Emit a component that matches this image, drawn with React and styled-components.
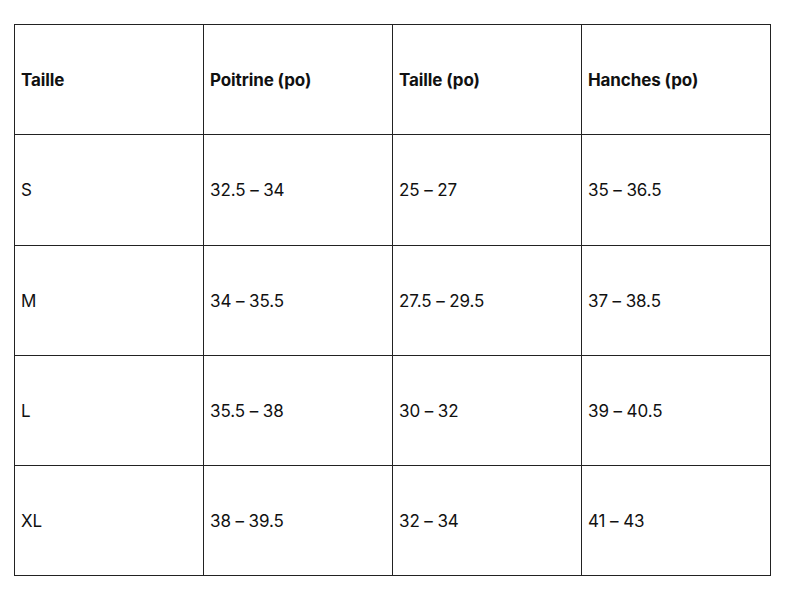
import React from "react";
import styled, { createGlobalStyle } from "styled-components";

const Global = createGlobalStyle`
  html, body { margin: 0; padding: 0; background: #ffffff; }
  body { font-family: "Inter", "Noto Sans", sans-serif; color: #111; }
`;

const Page = styled.div`
  width: 800px;
  height: 600px;
  padding: 24px 0 0 14px;
  box-sizing: border-box;
`;

const Table = styled.table`
  border-collapse: collapse;
  table-layout: fixed;
  width: 756px;
  border: 1px solid #222;
`;

const Cell = styled.td`
  width: 189px;
  height: ${(p) => p.$h}px;
  box-sizing: border-box;
  border: 1px solid #222;
  padding: 0 0 0 6px;
  vertical-align: middle;
  font-size: 17px;
  letter-spacing: -0.1px;
  font-weight: ${(p) => (p.$head ? 700 : 400)};
  color: #111;
  line-height: 20px;
`;

const header = ["Taille", "Poitrine (po)", "Taille (po)", "Hanches (po)"];
const rows = [
  ["S", "32.5 – 34", "25 – 27", "35 – 36.5"],
  ["M", "34 – 35.5", "27.5 – 29.5", "37 – 38.5"],
  ["L", "35.5 – 38", "30 – 32", "39 – 40.5"],
  ["XL", "38 – 39.5", "32 – 34", "41 – 43"],
];
const heights = [110, 111, 110, 110, 110];

export default function App() {
  return (
    <>
      <Global />
      <Page>
        <Table>
          <tbody>
            <tr>
              {header.map((h) => (
                <Cell key={h} $head $h={heights[0]}>
                  {h}
                </Cell>
              ))}
            </tr>
            {rows.map((r, i) => (
              <tr key={r[0]}>
                {r.map((c, j) => (
                  <Cell key={j} $h={heights[i + 1]}>
                    {c}
                  </Cell>
                ))}
              </tr>
            ))}
          </tbody>
        </Table>
      </Page>
    </>
  );
}
